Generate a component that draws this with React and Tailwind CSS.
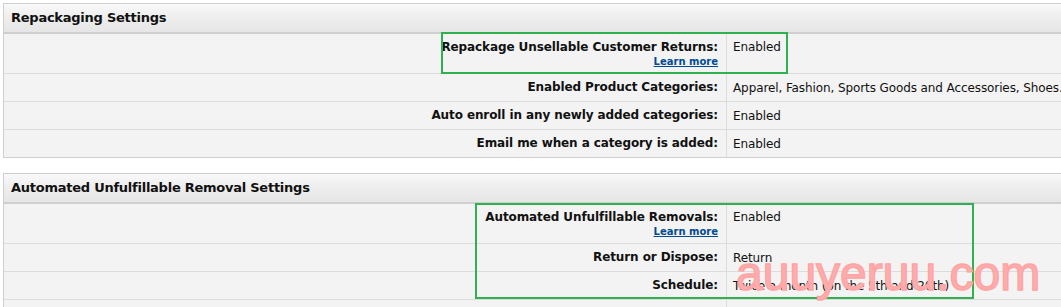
import React from "react";

const hdr =
  "h-[30px] flex items-center pl-[7px] border-b-2 border-[#cfcfcf] bg-[linear-gradient(to_bottom,#f9f9f9_0%,#eeeeee_45%,#e6e6e6_100%)] text-[13px] font-bold text-[#111] tracking-[-0.25px]";

function Row({ label, value, learn, tall, last }) {
  return (
    <div className={`grid grid-cols-[723px_1fr] ${last ? "" : "border-b border-[#dcdcdc]"}`}>
      <div
        className={`border-r border-[#dcdcdc] pr-[8px] flex flex-col items-end ${
          tall ? "h-[39px] pt-[6px]" : "h-[27px] justify-center"
        }`}
      >
        <span className="text-[12px] font-bold text-[#111] leading-[15px] tracking-[-0.1px]">{label}</span>
        {learn && (
          <a className="text-[10px] font-bold text-[#004b91] underline leading-[12px] mt-[1px]">
            Learn more
          </a>
        )}
      </div>
      <div
        className={`pl-[6px] text-[12px] text-[#111] whitespace-nowrap tracking-[-0.1px] ${
          tall ? "pt-[6px] leading-[15px]" : "flex items-center"
        }`}
      >
        {value}
      </div>
    </div>
  );
}

export default function App() {
  return (
    <div
      className="relative w-[1061px] h-[307px] overflow-hidden bg-white pt-[3px] pl-[3px]"
      style={{ fontFamily: '"DejaVu Sans", Verdana, sans-serif' }}
    >
      <div className="w-[1080px] border border-[#cfcfcf] bg-[#f3f3f3]">
        <div className={hdr}>Repackaging Settings</div>
        <Row tall learn label="Repackage Unsellable Customer Returns:" value="Enabled" />
        <Row
          label="Enabled Product Categories:"
          value="Apparel, Fashion, Sports Goods and Accessories, Shoes."
        />
        <Row label="Auto enroll in any newly added categories:" value="Enabled" />
        <Row last label="Email me when a category is added:" value="Enabled" />
      </div>

      <div className="w-[1080px] mt-[15px] border border-[#cfcfcf] bg-[#f3f3f3]">
        <div className={hdr}>Automated Unfulfillable Removal Settings</div>
        <Row tall learn label="Automated Unfulfillable Removals:" value="Enabled" />
        <Row label="Return or Dispose:" value="Return" />
        <Row label="Schedule:" value="Twice a month (on the 5th and 20th)" />
        <Row last label="" value="" />
      </div>

      <div className="absolute left-[441px] top-[32px] w-[347px] h-[42px] border-2 border-[#2eb14e]" />
      <div className="absolute left-[475px] top-[203px] w-[499px] h-[96px] border-2 border-[#2eb14e]" />

      <div
        className="absolute left-[736px] top-[250px] text-[48px] font-normal text-[#ffadad] leading-none [-webkit-text-stroke:1.5px_#ffa3a3]"
        style={{ fontFamily: '"Liberation Sans", Arial, sans-serif' }}
      >
        auuyeruu.com
      </div>
    </div>
  );
}
